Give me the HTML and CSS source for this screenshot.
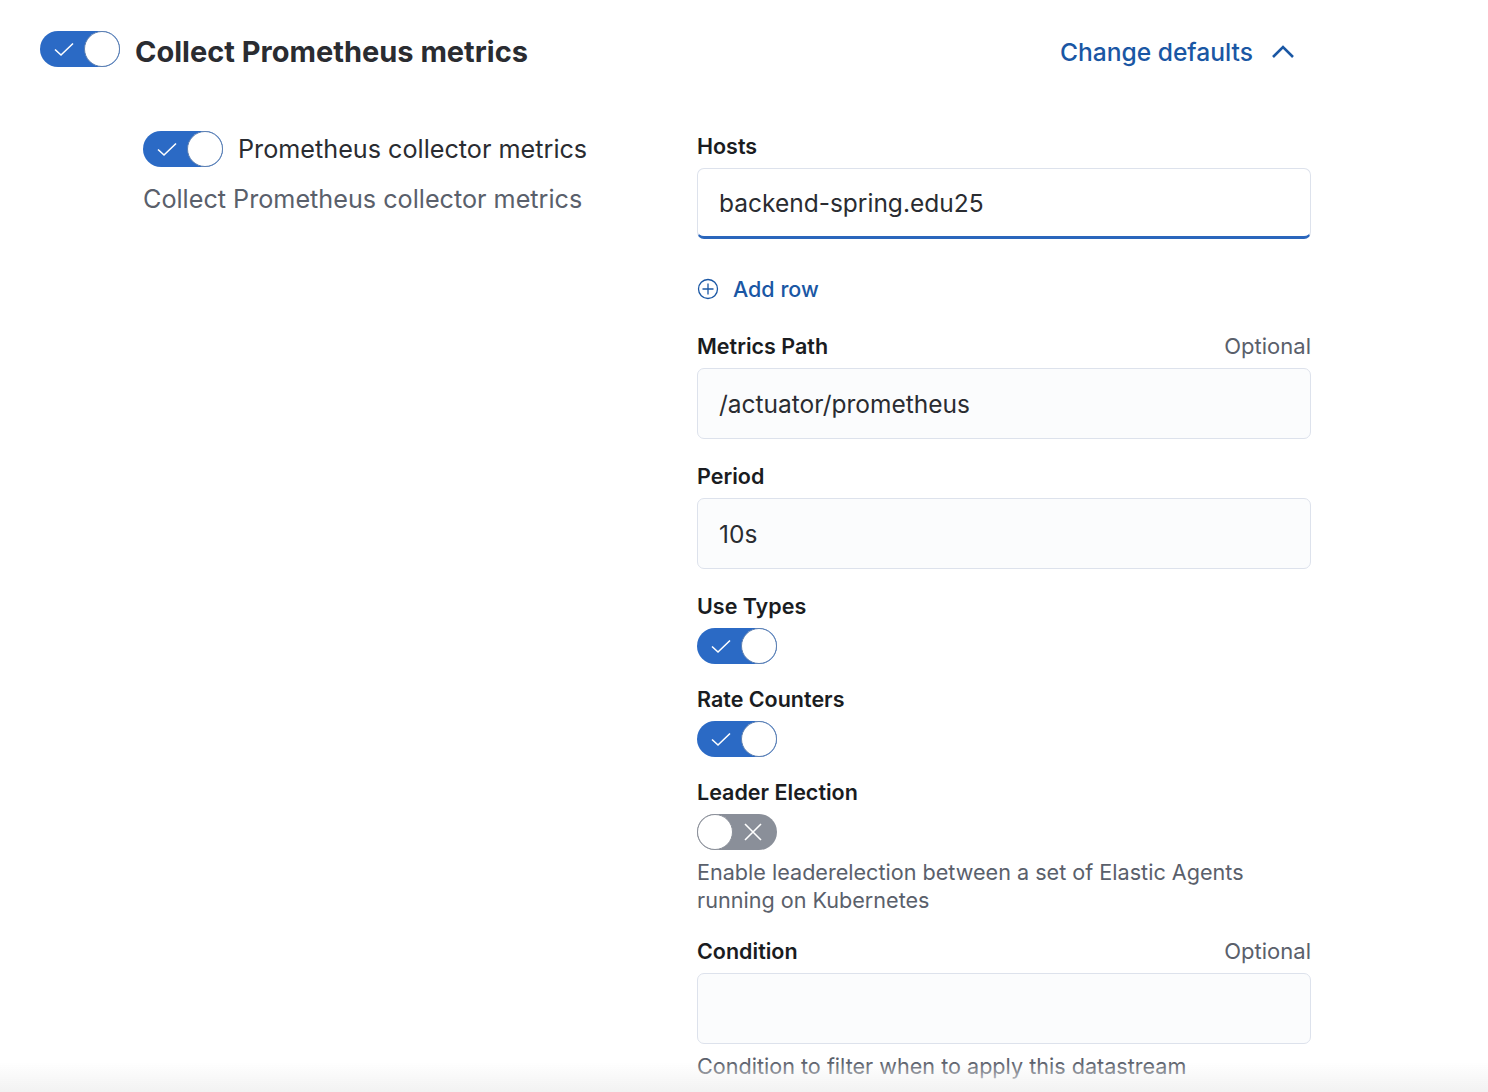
FILE: index.html
```html
<!DOCTYPE html>
<html>
<head>
<meta charset="utf-8">
<link rel="stylesheet" href="styles.css">
</head>
<body>
<div class="page">
  <div class="header">
    <div class="header-left">
      <span class="toggle on">
        <svg class="tick" viewBox="0 0 24 24" width="24" height="24"><path d="M3 12.5 L9 18 L21 6.5" fill="none" stroke="#fff" stroke-width="1.6"/></svg>
        <span class="knob"></span>
      </span>
      <h2 class="title">Collect Prometheus metrics</h2>
    </div>
    <div class="defaults">
      <span>Change defaults</span>
      <svg viewBox="0 0 24 16" width="24" height="16"><path d="M2 13 L12 3 L22 13" fill="none" stroke="#1a57a4" stroke-width="2.6"/></svg>
    </div>
  </div>

  <div class="body">
    <div class="left">
      <div class="switch-row">
        <span class="toggle on">
          <svg class="tick" viewBox="0 0 24 24" width="24" height="24"><path d="M3 12.5 L9 18 L21 6.5" fill="none" stroke="#fff" stroke-width="1.6"/></svg>
          <span class="knob"></span>
        </span>
        <span class="switch-label">Prometheus collector metrics</span>
      </div>
      <div class="left-help">Collect Prometheus collector metrics</div>
    </div>

    <div class="right">
      <div class="field">
        <div class="label-row"><span class="label">Hosts</span></div>
        <div class="input focused">backend-spring.edu25</div>
      </div>
      <div class="add-row">
        <svg viewBox="0 0 22 22" width="22" height="22"><circle cx="11" cy="11" r="9.5" fill="none" stroke="#1a57a4" stroke-width="1.3"/><path d="M11 5.5 V16.5 M5.5 11 H16.5" stroke="#1a57a4" stroke-width="1.3"/></svg>
        <span>Add row</span>
      </div>
      <div class="field">
        <div class="label-row"><span class="label">Metrics Path</span><span class="optional">Optional</span></div>
        <div class="input">/actuator/prometheus</div>
      </div>
      <div class="field">
        <div class="label-row"><span class="label">Period</span></div>
        <div class="input">10s</div>
      </div>
      <div class="field switch-field">
        <div class="label-row"><span class="label">Use Types</span></div>
        <span class="toggle on">
          <svg class="tick" viewBox="0 0 24 24" width="24" height="24"><path d="M3 12.5 L9 18 L21 6.5" fill="none" stroke="#fff" stroke-width="1.6"/></svg>
          <span class="knob"></span>
        </span>
      </div>
      <div class="field switch-field">
        <div class="label-row"><span class="label">Rate Counters</span></div>
        <span class="toggle on">
          <svg class="tick" viewBox="0 0 24 24" width="24" height="24"><path d="M3 12.5 L9 18 L21 6.5" fill="none" stroke="#fff" stroke-width="1.6"/></svg>
          <span class="knob"></span>
        </span>
      </div>
      <div class="field">
        <div class="label-row"><span class="label">Leader Election</span></div>
        <span class="toggle off">
          <span class="knob"></span>
          <svg class="cross" viewBox="0 0 24 24" width="24" height="24"><path d="M4 4 L20 20 M20 4 L4 20" fill="none" stroke="#fff" stroke-width="1.6"/></svg>
        </span>
        <div class="help">Enable leaderelection between a set of Elastic Agents<br>running on Kubernetes</div>
      </div>
      <div class="field">
        <div class="label-row"><span class="label">Condition</span><span class="optional">Optional</span></div>
        <div class="input"></div>
        <div class="help">Condition to filter when to apply this datastream</div>
      </div>
    </div>
  </div>
</div>
<div class="bottom-fade"></div>
</body>
</html>
```

FILE: styles.css
```css
html, body {
  margin: 0;
  padding: 0;
  background: #fff;
  font-family: Inter, "Noto Sans", sans-serif;
  color: #1a1c21;
}

.page {
  width: 1271px;
  padding: 31px 0 0 40px;
}

.header {
  display: flex;
  justify-content: space-between;
  align-items: center;
  height: 36px;
}

.header-left {
  display: flex;
  align-items: center;
  gap: 15px;
}

.title {
  margin: 0;
  padding-top: 4px;
  font-size: 29px;
  font-weight: 700;
  color: #2a2c31;
}

.defaults {
  display: flex;
  align-items: center;
  gap: 18px;
  padding-right: 16px;
  padding-top: 5px;
  color: #1a57a4;
  font-size: 24.6px;
  font-weight: 500;
}

.toggle {
  position: relative;
  display: flex;
  align-items: center;
  width: 80px;
  height: 36px;
  border-radius: 18px;
  box-sizing: border-box;
  flex: none;
}

.toggle.on {
  background: #2b6ac5;
  justify-content: space-between;
  padding-left: 12px;
}

.toggle.off {
  background: #8a8f99;
  justify-content: space-between;
  padding-right: 12px;
}

.toggle .knob {
  width: 36px;
  height: 36px;
  border-radius: 50%;
  background: #fff;
  box-sizing: border-box;
  border: 1.5px solid #6d7c95;
}

.toggle.on .knob {
  border-color: #5d7fb0;
}

.toggle.off .knob {
  border-color: #8a8f99;
}

.body {
  display: grid;
  grid-template-columns: 554px 614px;
  padding-left: 103px;
  margin-top: 64px;
}

.switch-row {
  display: flex;
  align-items: center;
  gap: 15px;
  height: 36px;
}

.switch-label {
  font-size: 25.2px;
  color: #2a2c31;
}

.left-help {
  margin-top: 18px;
  font-size: 25.2px;
  line-height: 28px;
  color: #5a606b;
}

.right {
  display: flex;
  flex-direction: column;
}

.field {
  display: flex;
  flex-direction: column;
  align-items: flex-start;
  margin-bottom: 22px;
}

.field.switch-field {
  margin-bottom: 20px;
}

.label-row {
  display: flex;
  justify-content: space-between;
  align-items: center;
  align-self: stretch;
  height: 30px;
  margin-bottom: 7px;
}

.label {
  font-size: 21.5px;
  font-weight: 600;
  color: #1a1c21;
}

.optional {
  font-size: 22px;
  color: #5a606b;
}

.input {
  align-self: stretch;
  box-sizing: border-box;
  height: 71px;
  border: 1.5px solid #dde2ec;
  border-radius: 7px;
  background: #fbfcfd;
  padding: 0 21px;
  display: flex;
  align-items: center;
  font-size: 24.5px;
  color: #2a2c31;
}

.input.focused {
  background: #fff;
  border-bottom: 3px solid #2a66bc;
}

.add-row {
  display: flex;
  align-items: center;
  gap: 14px;
  height: 30px;
  margin-top: 13px;
  margin-bottom: 27px;
  color: #1a57a4;
  font-size: 21.5px;
  font-weight: 500;
}

.help {
  margin-top: 8px;
  font-size: 21.6px;
  line-height: 28px;
  color: #5a606b;
}

.bottom-fade {
  position: fixed;
  left: 0;
  right: 0;
  bottom: 0;
  height: 30px;
  background: linear-gradient(to bottom, rgba(255,255,255,0), #f2f2f2);
  pointer-events: none;
}
```
